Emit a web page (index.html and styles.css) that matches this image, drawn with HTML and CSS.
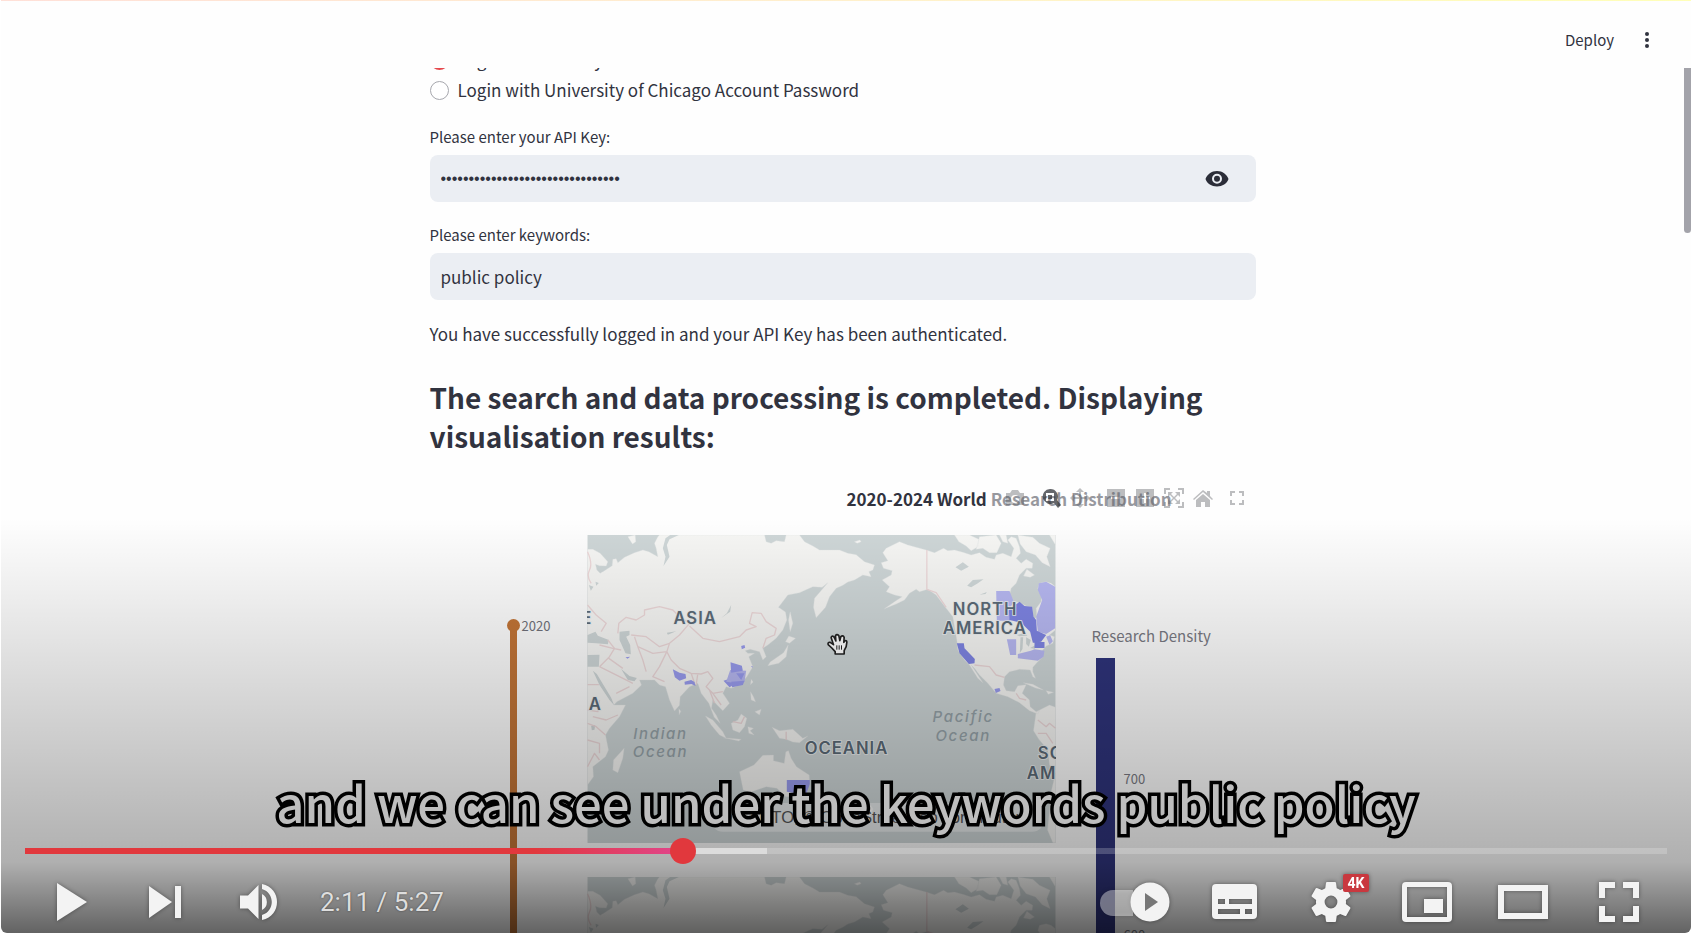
FILE: index.html
```html
<!DOCTYPE html>
<html lang="en">
<head>
<meta charset="utf-8">
<title>Research search demo</title>
<link rel="stylesheet" href="styles.css">
</head>
<body>
<div class="player">
  <div class="app">
    <header class="app-header">
      <button class="deploy" type="button">Deploy</button>
      <button class="menu" type="button" aria-label="Menu">
        <svg width="6" height="18" viewBox="0 0 6 18"><circle cx="3" cy="3" r="2"/><circle cx="3" cy="9" r="2"/><circle cx="3" cy="15" r="2"/></svg>
      </button>
    </header>
    <main class="scroller">
      <div class="column">
        <div class="options">
          <label class="option"><input type="radio" name="login" checked>Login with API Key</label>
          <label class="option"><input type="radio" name="login">Login with University of Chicago Account Password</label>
        </div>
        <div class="field">
          <label for="key">Please enter your API Key:</label>
          <div class="box">
            <input class="secret" id="key" type="password" value="abcdefghijklmnopqrstuvwxyz012345">
            <button class="reveal" type="button" aria-label="Show password">
              <svg width="24" height="16" viewBox="0 0 24 16"><path fill-rule="evenodd" d="M12 0C6.500 0 2.200 3.300.5 8c1.700 4.700 6 7.500 11.500 7.500S21.800 12.700 23.500 8C21.800 3.300 17.500 0 12 0zm0 12.800A5 5 0 1 1 12 2.800a5 5 0 0 1 0 10zm0-2a3 3 0 1 0 0-6 3 3 0 0 0 0 6z"/></svg>
            </button>
          </div>
        </div>
        <div class="field">
          <label for="words">Please enter keywords:</label>
          <div class="box"><input id="words" type="text" value="public policy"></div>
        </div>
        <p class="status">You have successfully logged in and your API Key has been authenticated.</p>
        <h3 class="result-title">The search and data processing is completed. Displaying visualisation results:</h3>
        <section class="chart">
          <div class="chart-head">
            <h4>2020-2024 World Research Distribution</h4>
            <div class="modebar">
              <svg class="tool group-end" viewBox="0 0 20 20"><path fill-rule="evenodd" d="M1 5h4l2-3h6l2 3h4v12H1zM10 7a4 4 0 1 0 0 8 4 4 0 0 0 0-8z"/></svg>
              <svg class="tool active" viewBox="0 0 20 20"><path fill-rule="evenodd" d="M9 1a7.500 7.500 0 1 0 4 14l4 5 3-3-4-5A7.500 7.500 0 0 0 9 1zM5 5h8v8H5zm2 2v4h4V7z"/></svg>
              <svg class="tool group-end" viewBox="0 0 20 20"><path d="M10 0l4 4h-3v5h5V6l4 4-4 4v-3h-5v5h3l-4 4-4-4h3v-5H4v3l-4-4 4-4v3h5V4H6z"/></svg>
              <svg class="tool" viewBox="0 0 20 20"><path fill-rule="evenodd" d="M1 1h18v18H1zM5 9v2h10V9z"/></svg>
              <svg class="tool" viewBox="0 0 20 20"><path fill-rule="evenodd" d="M1 1h18v18H1zM9 5v4H5v2h4v4h2v-4h4V9h-4V5z"/></svg>
              <svg class="tool" viewBox="0 0 20 20"><path d="M0 0h6v2H2v4H0zM14 0h6v6h-2V2h-4zM0 14h2v4h4v2H0zM18 14h2v6h-6v-2h4zM4 4h5L7 6l3 3 3-3-2-2h5v5l-2-2-3 3 3 3 2-2v5h-5l2-2-3-3-3 3 2 2H4v-5l2 2 3-3-3-3-2 2z"/></svg>
              <svg class="tool home" viewBox="0 0 20 20"><path d="M10 2L0 11l1 1 9-8 9 8 1-1-3-3V3h-3v2zM10 6l-7 6v7h5v-5h4v5h5v-7z"/></svg>
              <svg class="tool" viewBox="0 0 20 20"><path d="M3 3h5v2H5v3H3zM12 3h5v5h-2V5h-3zM3 12h2v3h3v2H3zM15 12h2v5h-5v-2h3z"/></svg>
            </div>
          </div>
          <div class="chart-body">
            <div class="years">
              <div class="year-track"></div>
              <span class="year">2020</span>
            </div>
            <div class="maps">
              <svg class="map" viewBox="24 45 1404 924">
                <defs>
                  <g id="world">
                    <rect class="sea" x="24" y="45" width="1404" height="924"/>
                    <path class="land" d="M24 88L40 88 62 100 85 125 80 138 60 137 48 133 52 150 62 160 75 152 98 137 100 118 110 116 115 128 135 112 165 98 190 90 208 95 235 110 230 85 225 70 235 50 240 45H555L560 65 575 70 590 62 615 65 620 45H660L675 65 700 78 720 90 780 90 805 100 830 104 855 125 885 135 880 150 868 155 875 170 850 165 825 180 805 186 790 196 770 205 750 230 738 262 710 293 702 262 705 235 722 215 745 188 728 202 700 200 660 218 625 225 597 262 618 276 622 300 610 330 590 355 565 375 550 385 560 410 550 420 540 395 512 388 497 392 505 400 525 400 508 410 520 440 502 470 480 495 455 505 440 500 430 520 450 550 430 572 410 552 400 540 396 565 410 585 422 610 404 592 388 550 365 520 355 490 330 500 302 530 300 556 285 573 270 540 258 500 240 495 225 480 180 480 186 495 160 520 112 545 103 555 138 555 120 590 90 625 78 645 87 690 78 710 40 740 42 770 24 795Z"/>
                    <path class="land" d="M134 685L102 720 100 750 115 758 130 715zM480 755L491 810 512 817 560 800 592 805 619 830 667 830 691 790 689 765 651 740 635 715 627 692 619 695 614 730 582 722 582 705 550 706 523 735zM578 622L600 632 640 628 670 655 685 648 660 668 640 666 620 658 600 655zM378 588L400 600 430 635 440 655 420 645 395 615zM432 653L485 658 478 663zM455 610L475 600 485 582 502 595 495 620 480 638 460 630zM505 620L522 625 512 632 524 645 508 640zM513 515L522 530 528 545 515 540zM526 575L545 568 540 585zM515 478l6 8-8 8zM628 348L648 355 630 370 618 365zM626 375L620 410 598 430 565 437 572 426 595 410 612 398zM632 275L640 310 632 335 627 300zM640 880l22-2-8 18zM850 905l15-20 8-30 8 12-15 38zM298 566l6 8-5 10zM145 50l22-5 2 20-10 7z"/>
                    <g transform="translate(720 0)">
                      <path class="land" d="M185 128L205 122 190 98 200 85 240 65 265 75 320 90 345 98 372 85 385 92 405 90 430 97 455 105 480 98 500 112 525 118 530 105 550 100 575 110 583 85 565 60 575 50 590 55 600 80 603 100 590 115 605 130 620 118 640 130 638 145 620 145 600 165 590 190 575 205 570 225 583 245 600 248 620 258 638 262 642 300 652 290 650 265 665 245 668 225 655 205 660 190 680 185 695 190 708 200V330L690 345 705 350 700 370 680 378 668 392 670 410 652 428 640 442 640 455 648 475 640 470 632 450 600 448 570 455 555 470 552 495 560 512 585 515 595 497 620 494 608 520 630 540 632 560 650 575 660 572 655 582 630 572 600 548 565 530 530 520 505 490 480 465 465 445 455 435 475 465 490 488 475 475 450 435 435 420 415 390 412 360 405 320 400 290 380 265 365 245 350 225 325 208 300 215 290 208 270 220 255 240 230 252 195 266 225 245 248 230 225 225 200 215 210 200 188 180 215 165 218 152 192 145zM405 45L450 45 478 58 475 80 455 92 440 78 418 65zM480 50L530 45 545 70 532 98 510 98 490 85 470 88zM595 45L640 52 660 70 692 85 682 110 692 140 668 128 648 105 620 95 602 72zM690 45h18v30zM622 148L645 165 632 172 612 168zM540 45l20 0 5 25-15-5zM612 488L640 493 672 510 648 504zM680 512l22 5-16 6zM105 65l16-5 4 5-12 5zM650 575L690 555 708 562V760L690 735 685 690 658 658 642 632zM708 760L696 810 690 870 684 930 700 968 708 968z"/>
                      <path class="sea" d="M408 142L430 127 448 140 425 152zM443 197L460 180 492 178 475 190 455 202zM480 224l22-8-4 6zM592 345l22-6 10 8-24 2zM603 352l8 0-2 35-8 12zM620 352l14 8-6 20-8-8zM632 384l22-12-8 14z"/>
                      <path class="border" d="M322 90V208L350 218 380 262M465 435L510 440 530 465 555 472M590 520L600 535 620 540M655 600L680 620 690 610 708 625M655 640L680 640 700 670"/>
                    </g>
                    <path class="sea" d="M120 335L150 332 150 345 140 350 152 375 154 403 138 400 120 360zM24 345L48 335 55 347 88 360 85 373 50 370 24 368zM24 405L60 404 58 440 24 440zM40 452L52 462 95 533 104 556 90 540 60 495zM125 447L150 468 172 474 165 484 145 480zM455 255L452 275 425 294 442 280zM262 338l28-4-25 10zM258 55L272 45 298 45 270 58 262 75 270 110 252 138 258 110 250 85zM28 195l14 5-8 12zM48 185l10 4-8 8zM35 618l12-3-2 14-8 2z"/>
                    <path class="border" d="M24 95Q40 130 30 150T35 190M24 255L50 285 80 310 65 335M115 340L118 310 140 292 170 300 195 285 195 270 240 260 280 270 300 290 330 310 300 345 270 370 262 395M330 318L370 355 420 365 480 350 500 330 530 320 510 310 518 278 545 280 560 305 590 325 585 345 560 355 550 385M155 345L200 350 240 380 270 370M165 350L175 380 220 400 262 395M262 395L275 420 300 445 335 460 365 462 385 455 400 475 380 500 400 520 430 515M175 380L190 420 200 455M262 395L240 440 220 470 255 485M60 375L100 385 125 390M60 440L90 410 105 385 85 360M88 415L130 445M60 440L120 470 160 490M110 520L150 500M335 460L345 490M355 460L350 495M390 510L405 550M400 520L425 555M24 494H58M24 570L55 575 60 540M40 590L80 600 115 585M24 610L50 620 78 645M24 660L60 670 60 700M24 740L45 700 60 720M460 605L485 610 495 590M620 635V660"/>
                  </g>
                </defs>
                <use href="#world"/>
                <path class="mid" d="M280 448L300 458 318 462 320 475 300 482 286 472zM315 485l20-5 10 6 3 12-12-6-20 2zM485 378l10-3 2 8-10 5zM138 412l14-2-8 6zM515 438l4 0 0 6zM432 482L455 475 470 490 450 502z"/>
                <path class="light" d="M452 450L500 452 495 485 470 490 440 485z"/>
                <path class="mid" d="M453 427L487 437 490 452 455 458zM455 485L495 482 490 495 458 502zM470 460l25 0-10 20z"/>
                <path class="mid" d="M622 780h69v12l-12 33-57-10z"/>
                <g transform="translate(720 0)">
                  <path class="light" d="M530 213H570L583 245 568 270 572 302H532zM658 190L680 185 707 200V325L680 342 655 335 650 290 668 240 655 210zM562 358H590V405H572zM595 402L634 392 645 388 675 392 672 410 655 422 595 415zM680 350l12-4 8 18-10 10z"/>
                  <path class="dark" d="M568 270L600 245 615 258 638 260 642 290 650 300 652 332 680 345 665 365 640 368 632 335 605 308 570 300zM645 366h30v18h-30z"/>
                  <path class="dark" d="M412 370H433L435 385 466 417 465 430 448 432 420 400z"/>
                  <path class="mid" d="M525 507l15-3 3 9-14 6z"/>
                </g>
                <g class="place">
                  <text x="347" y="311" text-anchor="middle">ASIA</text>
                  <text x="1217" y="284" text-anchor="middle">NORTH</text>
                  <text x="1216" y="343" text-anchor="middle">AMERICA</text>
                  <text x="801" y="701" text-anchor="middle">OCEANIA</text>
                  <text x="28" y="570">A</text>
                  <text x="5" y="311">E</text>
                  <text x="1375" y="718">SOUTH</text>
                  <text x="1342" y="777">AMERICA</text>
                </g>
                <g class="ocean">
                  <text x="243" y="656" text-anchor="middle">Indian</text>
                  <text x="243" y="711" text-anchor="middle">Ocean</text>
                  <text x="1151" y="606" text-anchor="middle">Pacific</text>
                  <text x="1151" y="662" text-anchor="middle">Ocean</text>
                </g>
                <rect class="credit-box" x="394" y="849" width="1000" height="86" rx="36"/>
                <text class="credit" x="885" y="909" text-anchor="middle">© CARTO, © OpenStreetMap contributors</text>
                <path class="hand" d="M757 384L746 374Q744 366 752 367L762 374 755 353Q756 346 763 350L769 363 768 347Q772 341 778 347L781 362 784 350Q790 344 794 352L793 367 797 362Q802 360 802 367L800 380 794 392V402H767V395z"/>
                <path class="hand-lines" d="M772 376v13M779 376v13M786 376v13"/>
              </svg>
              <svg class="map" viewBox="24 45 1404 924"><use href="#world"/></svg>
            </div>
            <div class="density">
              <span class="density-title">Research Density</span>
              <div class="scale">
                <div class="bar"></div>
                <div class="ticks"><span>700</span><span>600</span></div>
              </div>
            </div>
          </div>
        </section>
      </div>
    </main>
    <div class="scroll-thumb"></div>
  </div>

  <div class="overlay">
    <p class="caption">and we can see under the keywords public policy</p>
    <input class="progress" type="range" min="0" max="3270" value="1306" aria-label="Seek">
    <div class="controls">
      <button type="button" aria-label="Play"><svg width="32" height="40" viewBox="0 0 32 40"><path d="M1 1l30 19L1 39z"/></svg></button>
      <button type="button" aria-label="Next"><svg width="32" height="32" viewBox="0 0 32 32"><path d="M0 0l23 16L0 32zM26 0h6v32h-6z"/></svg></button>
      <button type="button" aria-label="Mute"><svg width="38" height="38" viewBox="0 0 38 38"><path d="M1 12.500h8L19.500 2v34L9 25.500H1zM23 11a9 9 0 0 1 0 16zM23 1c20 4 20 32 0 36v-5c13-4 13-22 0-26z"/></svg></button>
      <span class="time">2:11 / 5:27</span>
      <span class="spacer"></span>
      <button class="autoplay" type="button" aria-label="Autoplay"><svg width="70" height="40" viewBox="0 0 70 40"><path class="pill" d="M13 8H33V34H13a13 13 0 0 1 0-26z"/><circle cx="50" cy="20" r="19.500"/><path class="cut" d="M45 11l13 9-13 9z"/></svg></button>
      <button type="button" aria-label="Subtitles"><svg width="46" height="36" viewBox="0 0 46 36"><path fill-rule="evenodd" d="M4 0h37a4 4 0 0 1 4 4v27a4 4 0 0 1-4 4H4a4 4 0 0 1-4-4V4a4 4 0 0 1 4-4zM6 15v5h7v-5zM17 15v5h23v-5zM6 25v5h22v-5zM33 25v5h7v-5z"/></svg></button>
      <button class="settings" type="button" aria-label="Settings"><svg width="40" height="40" viewBox="2 2 20 20"><path d="M19.430 12.980c.04-.32.07-.64.07-.98s-.03-.66-.07-.98l2.110-1.650c.19-.15.24-.42.12-.64l-2-3.460c-.12-.22-.39-.3-.61-.22l-2.490 1c-.52-.4-1.080-.73-1.690-.98l-.38-2.650C14.460 2.180 14.250 2 14 2h-4c-.25 0-.46.18-.49.42l-.38 2.650c-.61.25-1.170.59-1.690.98l-2.490-1c-.23-.09-.49 0-.61.22l-2 3.460c-.13.22-.07.49.12.64l2.110 1.650c-.04.32-.07.65-.07.98s.03.66.07.98l-2.110 1.650c-.19.15-.24.42-.12.64l2 3.460c.12.22.39.3.61.22l2.490-1c.52.4 1.080.73 1.690.98l.38 2.650c.03.24.24.42.49.42h4c.25 0 .46-.18.49-.42l.38-2.650c.61-.25 1.170-.59 1.690-.98l2.490 1c.23.09.49 0 .61-.22l2-3.460c.12-.22.07-.49-.12-.64zM12 15.200a3.200 3.200 0 1 1 0-6.400 3.200 3.200 0 0 1 0 6.400z"/></svg><span class="quality">4K</span></button>
      <button type="button" aria-label="Miniplayer"><svg width="50" height="42" viewBox="0 0 50 42"><path fill-rule="evenodd" d="M4 1h42a4 4 0 0 1 4 4v32a4 4 0 0 1-4 4H4a4 4 0 0 1-4-4V5a4 4 0 0 1 4-4zM5 6v30h40V6zM22 18h19v14H22z"/></svg></button>
      <button type="button" aria-label="Theater mode"><svg width="50" height="34" viewBox="0 0 50 34"><path fill-rule="evenodd" d="M0 0h50v34H0zM6 6v22h38V6z"/></svg></button>
      <button type="button" aria-label="Full screen"><svg width="40" height="40" viewBox="0 0 40 40"><path d="M0 0h16v6H6v10H0zM24 0h16v16h-6V6H24zM0 24h6v10h10v6H0zM34 24h6v16H24v-6h10z"/></svg></button>
    </div>
  </div>
</div>
</body>
</html>
```
FILE: styles.css
```css
* { box-sizing: border-box; }
body {
  margin: 0;
  background: #fff;
  color: #31333f;
  font-family: "Noto Sans CJK SC", "Noto Sans", sans-serif;
}
button { border: 0; padding: 0; background: none; font: inherit; color: inherit; }
svg { display: block; }

.player {
  position: relative;
  height: 100vh;
  overflow: hidden;
  margin-left: 1px;
  border-radius: 0 0 6px 6px;
}
.app {
  position: relative;
  display: flex;
  flex-direction: column;
  height: 100%;
  background: #fefefe;
}
.app-header {
  display: flex;
  justify-content: flex-end;
  align-items: center;
  gap: 30px;
  flex: 0 0 68px;
  padding: 10px 41px 0 0;
  border-top: 1px solid;
  border-image: linear-gradient(90deg, #ffe0d8, #fff0cc 50%, #ffffb8) 1;
}
.deploy { font-size: 15px; line-height: 24px; }
.menu { fill: #31333f; }
.scroller { flex: 1; min-height: 0; overflow: hidden; padding-right: 7px; }
.scroll-thumb {
  position: absolute;
  top: 68px;
  right: 0;
  width: 7px;
  height: 165px;
  border-radius: 0 0 4px 4px;
  background: #a3a3aa;
}
.column { max-width: 826px; margin: -22px auto 0; }

.options { display: grid; gap: 2px; }
.option {
  display: flex;
  align-items: center;
  gap: 9px;
  font-size: 17px;
  line-height: 28px;
}
.option input {
  appearance: none;
  width: 19px;
  height: 19px;
  margin: 0;
  border: 1px solid #a6a7ad;
  border-radius: 50%;
  background: #fff;
}
.option input:checked { border: 6px solid #e5484d; }

.field { margin-top: 19px; }
.field label { display: block; font-size: 15px; line-height: 28px; }
.box {
  display: flex;
  align-items: center;
  height: 47px;
  margin-top: 4px;
  padding: 0 27px 0 11px;
  border-radius: 8px;
  background: #ebeef3;
}
.box input {
  flex: 1;
  min-width: 0;
  border: 0;
  padding: 0;
  outline: 0;
  background: none;
  color: #31333f;
  font: 17px "Noto Sans CJK SC", "Noto Sans", sans-serif;
}
.box .secret { font: 16px "Liberation Sans", sans-serif; }
.reveal { fill: #2b2d38; }

.status { margin: 20px 0 0; font-size: 17px; line-height: 28px; }
.result-title { margin: 30px 0 0; font-size: 28px; line-height: 39px; font-weight: 600; }

.chart { margin-top: 29px; }
.chart-head { position: relative; height: 50px; }
.chart-head h4 { margin: 0; padding: 0 0 0 417px; font-size: 17px; line-height: 28px; }
.modebar {
  position: absolute;
  top: 3px;
  right: 9px;
  display: flex;
  align-items: center;
  gap: 9px;
  padding-left: 15px;
  background: rgba(254, 254, 254, 0.5);
}
.tool { width: 20px; height: 20px; fill: rgba(90, 92, 98, 0.4); }
.tool.active { fill: rgba(50, 52, 58, 0.75); }
.group-end { margin-right: 7px; }
.home { margin-right: 5px; }

.chart-body { display: grid; grid-template-columns: 157px 469px 1fr; }
.years { display: flex; gap: 5px; padding: 84px 0 0 80px; }
.year-track { position: relative; width: 7px; margin-top: 7px; background: #c37537; }
.year-track::before {
  content: "";
  position: absolute;
  left: -3px;
  top: -7px;
  width: 13px;
  height: 13px;
  border-radius: 50%;
  background: #c37537;
}
.year { font-size: 13px; line-height: 14px; color: #70717a; }
.maps { display: grid; align-content: start; gap: 34px; }
.map { width: 100%; height: 308px; overflow: hidden; }
.sea { fill: #cfd7d8; }
.land { fill: #f7f7f5; stroke: #e3e7e7; stroke-width: 1; }
.border { fill: none; stroke: #eed9da; stroke-width: 4; stroke-linejoin: round; }
.light { fill: #b8b9f3; }
.mid { fill: #9a9df0; }
.dark { fill: #7f85e4; }
.place {
  font: 600 50px Inter, sans-serif;
  letter-spacing: 3px;
  fill: #5c6b78;
  stroke: #eef1f1;
  stroke-width: 5px;
  paint-order: stroke;
}
.ocean { font: italic 500 45px Inter, sans-serif; letter-spacing: 5px; fill: #96a3a9; }
.credit-box { fill: rgba(255, 255, 255, 0.5); }
.credit { font: 50px "Liberation Sans", sans-serif; fill: #555; }
.hand { fill: #fff; stroke: #222; stroke-width: 5; stroke-linejoin: round; }
.hand-lines { stroke: #222; stroke-width: 3; }

.density { padding: 89px 0 0 36px; color: #797a83; }
.density-title { display: block; font-size: 15px; line-height: 24px; }
.scale { display: flex; gap: 9px; height: 542px; padding: 10px 0 0 4px; }
.bar { width: 19px; background: #2f347c; }
.ticks { display: grid; grid-auto-rows: 156px; padding-top: 113px; font-size: 13px; line-height: 16px; }

.overlay {
  position: absolute;
  inset: auto 0 0 0;
  display: flex;
  flex-direction: column;
  justify-content: flex-end;
  height: 415px;
  padding: 0 24px;
  background: linear-gradient(rgba(0, 0, 0, 0), rgba(0, 0, 0, 0.07) 20%, rgba(0, 0, 0, 0.21) 58%, rgba(0, 0, 0, 0.31) 83%, rgba(0, 0, 0, 0.61));
}
.caption {
  margin: 0 0 4px;
  text-align: center;
  font-size: 49px;
  line-height: 64px;
  font-weight: 500;
  color: #bebebe;
  -webkit-text-stroke: 7px #000;
  stroke-linejoin: round;
  paint-order: stroke fill;
}
.progress {
  appearance: none;
  width: 100%;
  height: 26px;
  margin: 0;
  background: none;
}
.progress::-webkit-slider-runnable-track {
  height: 6px;
  background: linear-gradient(90deg, #e1383d 0 31%, #e1458c 40%, #dcdcdc 40% 45.200%, rgba(255, 255, 255, 0.2) 45.200%);
}
.progress::-webkit-slider-thumb {
  appearance: none;
  width: 26px;
  height: 26px;
  margin-top: -10px;
  border-radius: 50%;
  background: #e1383d;
}
.controls { display: flex; align-items: center; height: 69px; padding-top: 6px; }
.controls button {
  display: flex;
  justify-content: center;
  align-items: center;
  width: 96px;
  height: 48px;
  fill: #f3f3f3;
  filter: drop-shadow(0 0 2px rgba(0, 0, 0, 0.4));
}
.controls button:nth-child(-n+3) { width: 93px; }
.controls .autoplay { width: 104px; }
.pill { fill: rgba(255, 255, 255, 0.4); }
.cut { fill: #777; }
.time { margin-left: 16px; font: 26px Roboto, sans-serif; color: #dedede; text-shadow: 0 0 2px rgba(0, 0, 0, 0.5); }
.spacer { flex: 1; }
.settings { position: relative; }
.quality {
  position: absolute;
  top: -4px;
  right: 10px;
  width: 26px;
  height: 18px;
  border-radius: 2px;
  background: #c9383f;
  color: #fff;
  font: 700 14px/18px Roboto, sans-serif;
  text-align: center;
}
```
